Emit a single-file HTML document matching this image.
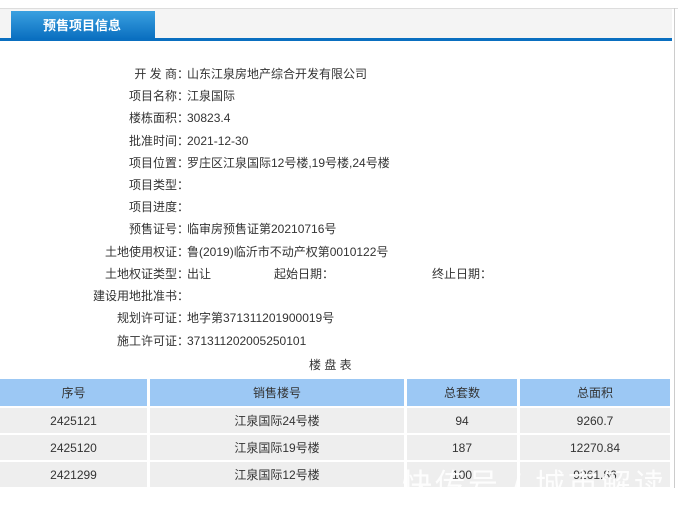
<!DOCTYPE html>
<html><head><style>
body{margin:0;width:678px;height:506px;background:#fff;font-family:"Liberation Sans","Noto Sans CJK SC",sans-serif;font-size:12px;color:#333;position:relative;overflow:hidden}
.top{position:absolute;left:0;top:8px;width:678px;height:1px;background:#ddd}
.hdr{position:absolute;left:0;top:9px;width:672px;height:30px;background:#f4f4f4}
.tab{position:absolute;left:11px;top:11px;width:144px;height:28px;background:linear-gradient(#3aa0e0,#0a6fc0);color:#fff;font-weight:bold;font-size:13px;line-height:30px;text-indent:32px}
.bar{position:absolute;left:0;top:38px;width:672px;height:3px;background:#0a6fc0}
.rb{position:absolute;left:674px;top:8px;width:1px;height:480px;background:#ccc}
.row{position:absolute;left:0;width:678px;height:20px;line-height:20px;white-space:nowrap}
.l{position:absolute;right:489px;text-align:right}
.v{position:absolute;left:187px}
table{position:absolute;left:-3px;top:377px;width:676px;border-collapse:separate;border-spacing:3px 2px;text-align:center;font-size:12px;table-layout:fixed}
td{height:25px;background:#eee;padding:0}
th{height:27px;background:#9cc8f4;font-weight:normal;padding:0}
.wm{position:absolute;left:402px;top:460px;color:#fff;font-size:30px;opacity:.9;letter-spacing:3px;white-space:nowrap}
</style></head><body>
<div class="top"></div><div class="hdr"></div><div class="tab">预售项目信息</div><div class="bar"></div><div class="rb"></div>
<div class="row" style="top:64px"><span class="l">开 发 商：</span><span class="v">山东江泉房地产综合开发有限公司</span></div>
<div class="row" style="top:86px"><span class="l">项目名称：</span><span class="v">江泉国际</span></div>
<div class="row" style="top:108px"><span class="l">楼栋面积：</span><span class="v">30823.4</span></div>
<div class="row" style="top:131px"><span class="l">批准时间：</span><span class="v">2021-12-30</span></div>
<div class="row" style="top:153px"><span class="l">项目位置：</span><span class="v">罗庄区江泉国际12号楼,19号楼,24号楼</span></div>
<div class="row" style="top:175px"><span class="l">项目类型：</span></div>
<div class="row" style="top:197px"><span class="l">项目进度：</span></div>
<div class="row" style="top:219px"><span class="l">预售证号：</span><span class="v">临审房预售证第20210716号</span></div>
<div class="row" style="top:242px"><span class="l">土地使用权证：</span><span class="v">鲁(2019)临沂市不动产权第0010122号</span></div>
<div class="row" style="top:264px"><span class="l">土地权证类型：</span><span class="v">出让</span><span style="position:absolute;left:274px">起始日期：</span><span style="position:absolute;left:432px">终止日期：</span></div>
<div class="row" style="top:286px"><span class="l">建设用地批准书：</span></div>
<div class="row" style="top:308px"><span class="l">规划许可证：</span><span class="v">地字第371311201900019号</span></div>
<div class="row" style="top:331px"><span class="l">施工许可证：</span><span class="v">371311202005250101</span></div>
<div class="row" style="top:355px;left:309px;width:100px">楼 盘 表</div>
<table>
<colgroup><col style="width:147px"><col style="width:254px"><col style="width:110px"><col></colgroup>
<tr><th>序号</th><th>销售楼号</th><th>总套数</th><th>总面积</th></tr>
<tr><td>2425121</td><td>江泉国际24号楼</td><td>94</td><td>9260.7</td></tr>
<tr><td>2425120</td><td>江泉国际19号楼</td><td>187</td><td>12270.84</td></tr>
<tr><td>2421299</td><td>江泉国际12号楼</td><td>100</td><td>9261.86</td></tr>
</table>
<div class="wm">快传号 / 城市解读</div>
</body></html>
